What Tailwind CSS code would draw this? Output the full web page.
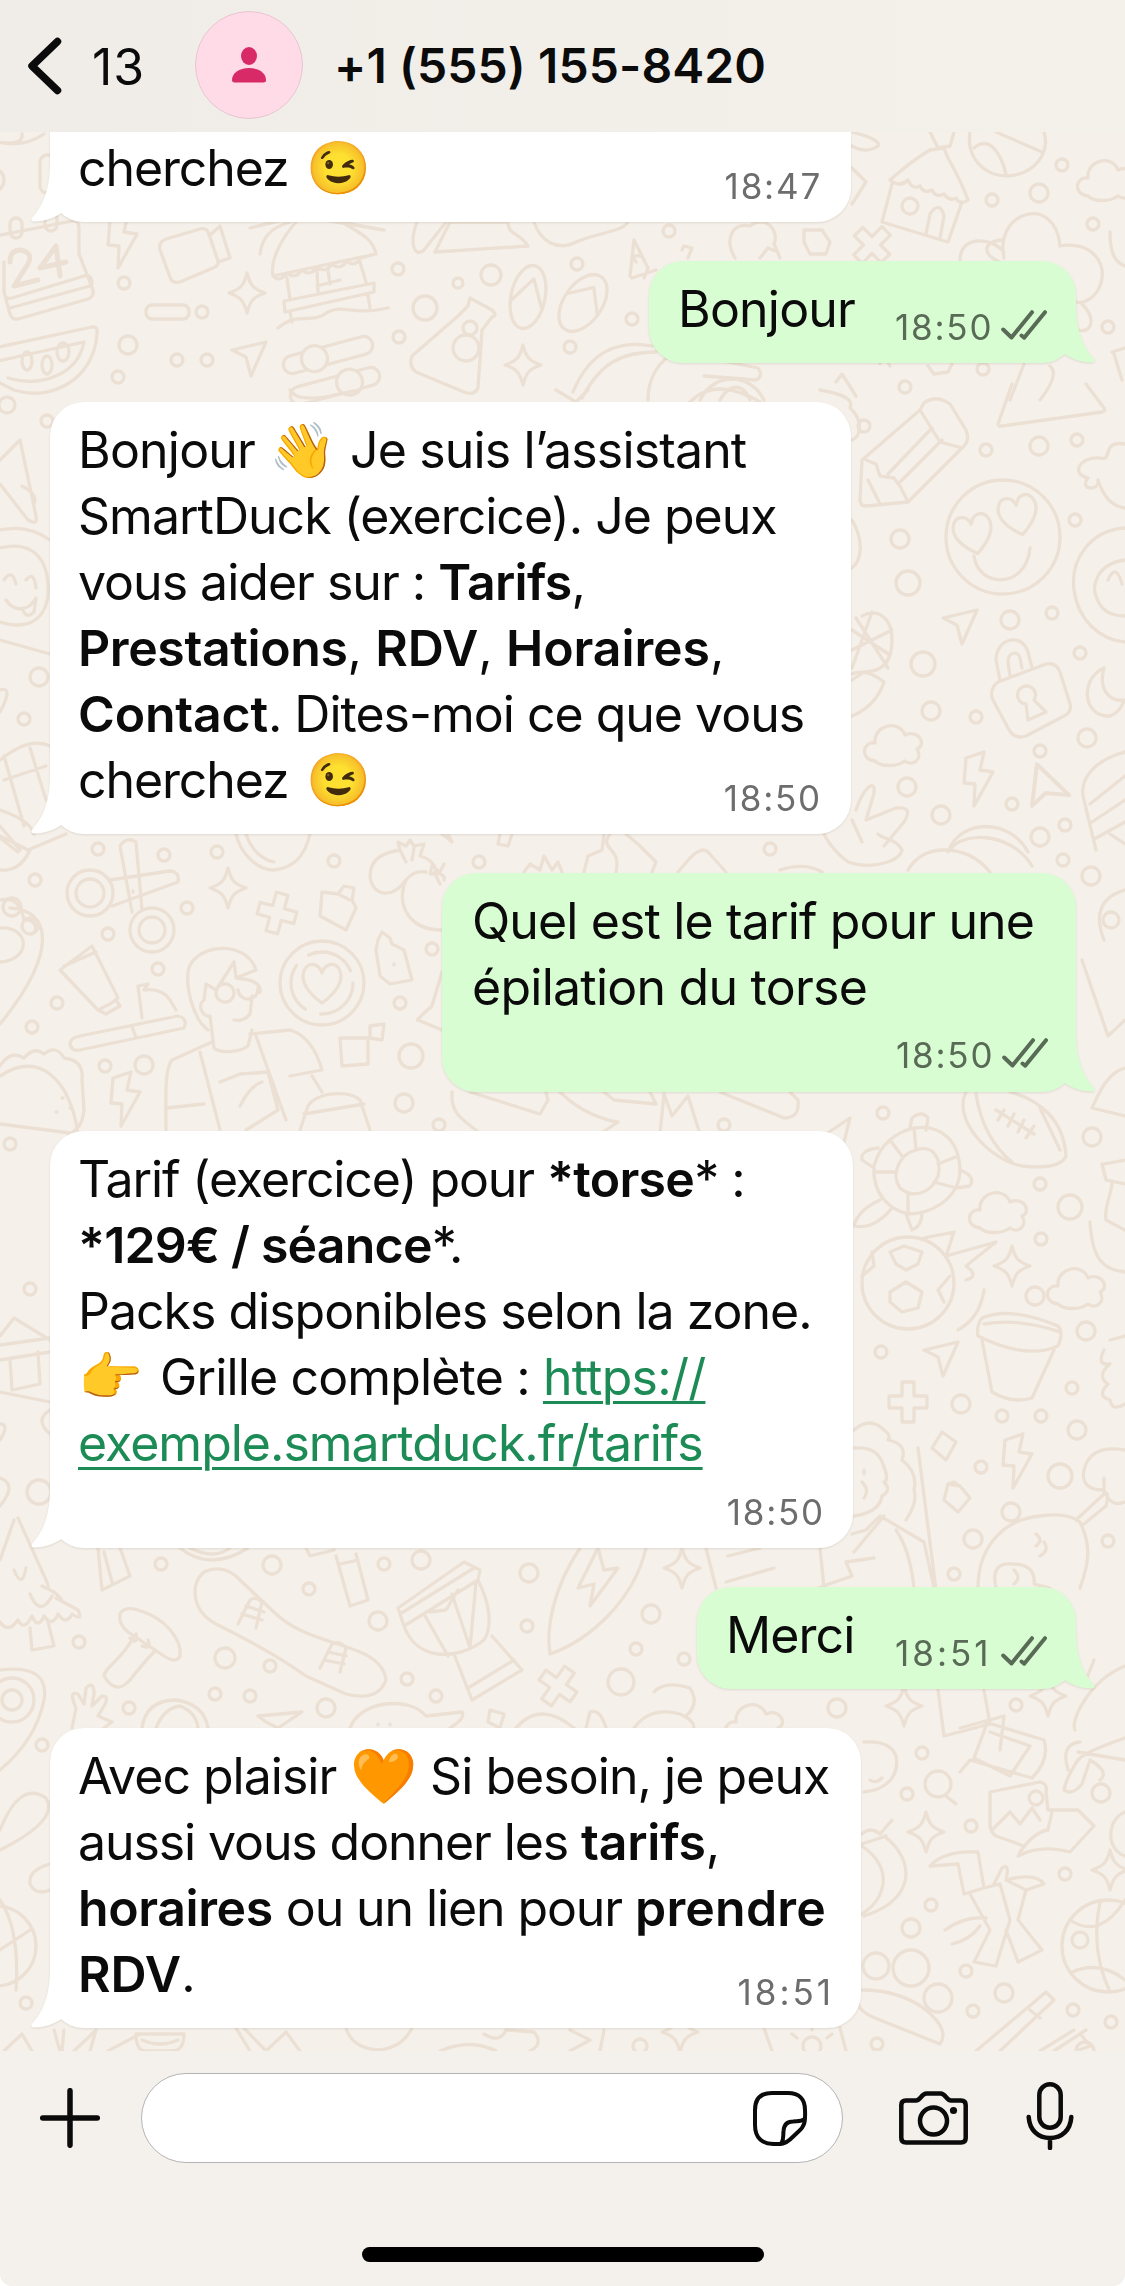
<!DOCTYPE html>
<html lang="fr">
<head>
<meta charset="utf-8">
<title>Discussion</title>
<script src="https://cdn.jsdelivr.net/npm/@tailwindcss/browser@4"></script>
</head>
<body class="bg-white">
<svg class="hidden" aria-hidden="true">
  <symbol id="tail" viewBox="0 0 40 60" overflow="visible"><path d="M19 0C19 28 12 44 .5 56.500Q0 59.500 3 59.500C12 59.500 23 56 30.500 51L42 36V0Z"/></symbol>
  <symbol id="ticks" viewBox="0 0 46 30"><path d="M2.200 19.500L10.500 27.500L31 2.200M20.500 25.500L23.200 27.700L44 2.200" fill="none" stroke="currentColor" stroke-width="4" stroke-linecap="round" stroke-linejoin="round"/></symbol>
</svg>
<div class="flex h-[2286px] w-[1125px] flex-col overflow-hidden rounded-b-[12px] bg-[#f4f0eb] font-['Inter','Noto_Color_Emoji',sans-serif] text-[50px] leading-[66px] tracking-[-1px] text-[#0b0b0b]">

  <header class="flex h-[132px] shrink-0 items-center bg-linear-to-r from-[#f0ede8] to-[#f4f1eb] pl-[27px]">
    <svg class="h-[58px] w-[36px] shrink-0" viewBox="0 0 36 58" fill="none" stroke="#0b0b0b" stroke-width="7.500" stroke-linecap="round" stroke-linejoin="round"><path d="M30.500 4.500L5 29L30.500 53.500"/></svg>
    <span class="ml-[29px] mt-px w-[103px] tracking-[1px]">13</span>
    <div class="-mt-[2px] flex size-[108px] shrink-0 items-center justify-center rounded-full border border-[#e8c5d2] bg-[#ffdae7]">
      <svg class="h-[36px] w-[34px]" viewBox="0 0 34 36" fill="#d72a66"><ellipse cx="17" cy="9" rx="8" ry="9"/><path d="M0 33C0 26 7 21 17 21S34 26 34 33Q34 35.500 31.500 35.500H2.500Q0 35.500 0 33Z"/></svg>
    </div>
    <h1 class="ml-[31px] -mt-px whitespace-nowrap text-[48px] font-semibold tracking-[.1px]">+1 (555) 155-8420</h1>
  </header>

  <main class="relative h-[1919px] shrink-0 overflow-hidden bg-[#f5f1ea]">
    <svg class="absolute inset-0 h-[1919px] w-[1125px]" viewBox="0 132 1125 1919" fill="none" stroke="#ebe0d3" stroke-width="3.300" stroke-linecap="round" stroke-linejoin="round">
      <defs>
        <path id="spark" d="M0 -20C3 -8 6 -4 18 0C6 4 3 8 0 20C-3 8 -6 4 -18 0C-6 -4 -3 -8 0 -20Z"/>
        <path id="cross" d="M-6 -20H6V-6H19V6H6V20H-6V6H-19V-6H-6Z"/>
        <path id="bolt" d="M-12 -20L6 -26L2 -8L15 -6L-4 28L-3 6L-14 5Z"/>
        <path id="arrow" d="M-17 -8L17 -16L2 18L-3 -1Z"/>
        <path id="cloud" d="M-20 16C-36 14 -32 -4 -20 -2C-22 -20 4 -26 10 -10C24 -16 32 0 22 4C28 14 18 22 10 16C2 22 -14 22 -20 16Z"/>
        <path id="heart" d="M0 22C-14 12 -22 0 -18 -10C-14 -20 -3 -18 0 -8C3 -18 14 -20 18 -10C22 0 14 12 0 22Z"/>
      </defs>
      <g id="dots"></g>

      <use href="#spark" x="247" y="293"/><use href="#spark" x="523" y="365"/><use href="#spark" x="228" y="888"/><use href="#spark" x="1012" y="1266"/><use href="#spark" x="682" y="1568"/><use href="#spark" x="904" y="1706"/><use href="#spark" x="926" y="1832"/><use href="#spark" x="1110" y="1870"/><use href="#spark" x="1048" y="1696"/><use href="#spark" x="680" y="2032"/>
      <use href="#cross" transform="translate(872 245) rotate(45)"/><use href="#cross" transform="translate(277 913) rotate(15)"/><use href="#cross" x="908" y="1402"/><use href="#cross" transform="translate(558 1686) rotate(35)"/>
      <use href="#bolt" x="122" y="240"/><use href="#bolt" x="978" y="778"/><use href="#bolt" x="125" y="1098"/><use href="#bolt" x="1017" y="1460"/>
      <use href="#arrow" x="249" y="358"/><use href="#arrow" x="960" y="626"/><use href="#arrow" x="941" y="1358"/><use href="#arrow" transform="translate(1048 790) rotate(-70) scale(1.200)"/>
      <use href="#cloud" x="1108" y="180"/><use href="#cloud" x="895" y="745"/><use href="#cloud" x="1000" y="1212"/><use href="#cloud" x="1078" y="1288"/><use href="#cloud" x="756" y="1724"/>

      <!-- calendar, watermelon, video camera -->
      <path d="M-4 236L72 221Q79 220 79 228V254L93 290Q94 297 88 299L18 319Q12 320 10 314L4 292V262M10 308L90 286M4 292Q5 300 12 298L84 276Q92 274 92 284"/>
      <path d="M10 262Q10 250 20 250Q34 252 28 264L14 286L38 280M40 268L56 246L60 276M40 268L66 262" stroke-width="5"/>
      <rect x="10" y="218" width="12" height="20" rx="6"/><rect x="45" y="213" width="12" height="18" rx="6"/>
      <path d="M-6 348L92 327Q98 326 97 334C94 380 50 402 14 390L-6 380M-6 362L84 342C78 374 42 388 8 378"/>
      <ellipse cx="27" cy="361" rx="5" ry="9"/><ellipse cx="47" cy="365" rx="5" ry="9"/><ellipse cx="63" cy="352" rx="6" ry="9"/>
      <path d="M160 250Q158 242 166 239L200 229Q206 227 209 234L218 261Q219 266 213 268L180 282Q172 284 170 277ZM209 236L220 226L230 258L218 262"/>
      <rect x="146" y="305" width="43" height="14" rx="6"/>
      <path d="M-8 140Q20 150 44 134M-4 142Q24 146 22 134"/><rect x="40" y="155" width="24" height="38" rx="7"/><circle cx="-8" cy="180" r="12"/>

      <!-- beach hut -->
      <path d="M250 228L300 216L384 230L342 222C356 232 372 236 376 254L273 276C270 262 280 240 296 222M260 254C262 238 270 228 290 222M273 276Q280 283 287 273Q295 280 302 270Q310 277 317 267Q325 274 332 264Q340 271 347 261Q354 268 361 258L376 254M287 278L290 300M317 270L318 292M360 262L366 282M284 301L374 283L374 292L285 312ZM290 312L292 322M368 296L370 308M278 328C300 310 310 326 328 312C344 304 352 316 388 308M317 286L340 280M328 270L330 284"/>
      <!-- levers -->
      <g transform="rotate(-15 328 355)"><rect x="282" y="346" width="92" height="18" rx="9"/><circle cx="314" cy="355" r="13" fill="#f5f1ea"/></g>
      <g transform="rotate(-15 335 386)"><rect x="289" y="377" width="92" height="18" rx="9"/><circle cx="350" cy="386" r="13" fill="#f5f1ea"/></g>
      <path d="M417 222C408 246 416 258 424 250L446 222M435 252L450 222L508 222C508 236 520 232 528 246ZM534 222C540 240 556 252 576 242C600 232 622 232 628 222"/>
      <!-- flip-flops -->
      <g transform="rotate(12 528 297)"><ellipse cx="528" cy="297" rx="17" ry="32"/><path d="M512 304L530 278L543 304"/></g>
      <g transform="rotate(35 583 303)"><ellipse cx="583" cy="303" rx="19" ry="32"/><path d="M565 304L583 284L601 304"/></g>
      <!-- flask -->
      <path d="M470 298L492 310Q498 316 492 317L482 330L478 388Q474 396 464 392L416 372Q408 366 412 356L458 316L468 306Z"/><circle cx="466" cy="348" r="13"/><circle cx="470" cy="328" r="7"/>
      <path d="M573 392C590 350 620 340 652 346M582 398C600 364 620 352 656 352M648 400C648 376 660 360 676 352L758 368Q764 376 756 380L704 376M700 400C714 372 750 372 764 400M720 400C730 382 744 384 750 400"/>
      <path d="M836 382L842 374L856 396M880 364L884 356L890 366M928 366L934 374L948 372L952 364M1010 400L1024 364M1040 400Q1060 374 1050 366M1112 352L1125 348M1114 354L1122 380"/>
      <!-- candle, flower -->
      <path d="M630 276L634 240L648 268L644 278M632 278L656 270M636 262Q630 254 642 256M682 250L684 246L692 248L688 258M735 258C724 240 732 222 750 226C764 214 780 230 774 244L780 258M760 258L768 248L778 252"/>
      <path d="M804 230L822 230L830 242L826 254L810 254L804 242Z"/>
      <!-- house with tower -->
      <path d="M930 132L938 148L950 146L954 132M944 148L948 158C956 172 962 184 968 200Q960 206 956 198Q950 202 944 194Q936 198 932 190Q924 194 920 186Q912 190 908 180Q900 188 890 180C906 166 916 158 930 150ZM892 184L882 222L948 242L962 202M926 234L930 214Q940 200 944 216L940 238"/><ellipse cx="910" cy="206" rx="8" ry="8"/>
      <path d="M852 132Q882 140 878 146Q866 154 852 146M852 168L866 182L852 204"/>
      <!-- beach ball -->
      <path d="M970 132C966 158 984 176 1008 176C1036 174 1050 152 1044 132M974 148C988 136 1000 150 1006 174M996 132L1042 152"/>
      <!-- flower -->
      <path d="M1000 262C980 254 984 240 1004 240M1004 258C994 210 1056 194 1060 246C1090 240 1112 264 1098 290C1092 300 1082 304 1076 302M960 260C960 236 990 236 1004 252M1082 304C1098 320 1090 334 1078 330"/><path d="M1110 232C1110 252 1114 262 1125 266"/>

      <!-- triangle, pencil -->
      <path d="M1012 384L998 424Q998 427 1002 426L1102 412Q1106 411 1104 408L1086 384"/>
      <path d="M924 403Q936 394 950 404L966 430Q970 440 964 446L908 502L866 506Q860 506 860 500L862 460L920 410ZM866 460L876 464L880 476L894 478L900 486L908 502M920 410L940 442L962 448M932 428L888 474M942 440L898 484M868 480L880 504"/>
      <path d="M852 410C862 420 862 436 852 440M852 520C864 540 862 560 852 568M820 390Q856 396 850 408M290 390Q296 402 330 396L358 390M556 390L576 402L588 390M690 402Q716 376 760 402"/>
      <!-- smiley with heart eyes -->
      <circle cx="1003" cy="537" r="57"/><use href="#heart" transform="translate(973 532) rotate(-12)"/><use href="#heart" transform="translate(1018 513) rotate(-12)"/><path d="M974 556C978 588 1026 590 1030 548"/>
      <path d="M1125 444C1100 440 1114 462 1100 458C1080 456 1070 474 1088 478C1078 490 1100 492 1098 480C1104 498 1112 506 1125 508M1125 528C1090 530 1070 560 1074 590C1078 620 1100 640 1125 642M1125 560C1096 564 1092 586 1096 596C1100 610 1110 616 1125 616M1108 580Q1116 562 1122 584"/>
      <!-- corn -->
      <path d="M862 616C876 608 892 616 892 640C892 660 884 672 864 672L852 680M852 650L892 630M852 630L890 655M856 618L888 668M872 612L852 668M852 674Q866 668 884 682Q876 706 852 716"/>
      <!-- padlock, moon -->
      <path d="M1000 680L996 660C996 638 1022 632 1028 652L1032 668M1010 676L1008 662C1008 652 1018 650 1020 658L1022 668M998 682L1046 664Q1056 662 1060 672L1070 704Q1072 712 1064 716L1026 736Q1014 740 1008 728L992 698Q990 688 998 682ZM1026 704A9 9 0 1 1 1034 700L1046 712L1028 720Z"/>
      <path d="M1104 668C1078 680 1084 718 1110 716C1116 714 1122 708 1124 700C1110 702 1098 690 1104 668"/>
      <path d="M856 810C864 784 880 776 872 800L866 820L896 808Q914 806 904 822L884 846M852 820L862 842M948 852C960 818 1010 818 1028 852M1125 752C1094 760 1078 780 1084 800L1096 850M1090 804L1125 776M1092 822L1125 800M1096 838L1125 822"/>
      <!-- left column doodles -->
      <path d="M0 460L20 440L36 516Q38 526 28 520L0 484M22 486Q38 494 34 504M0 530Q28 524 50 540M0 548C34 540 50 560 48 596C44 622 26 630 0 622M4 580Q12 568 16 584M26 580Q34 570 36 588M6 600C14 612 28 612 36 598L34 612Q26 620 22 608M0 640L50 654M0 690Q14 686 0 712M0 760Q30 736 50 746M4 756L24 826M30 748L46 800M4 780L46 766M0 810Q30 820 34 834M0 826L20 850"/>
      <path d="M0 836L28 850L66 834M0 870Q20 872 30 850M0 838L18 852"/>

      <!-- scissors -->
      <circle cx="90" cy="893" r="23"/><circle cx="90" cy="893" r="14"/><circle cx="152" cy="930" r="22"/><circle cx="152" cy="930" r="13"/>
      <path d="M110 880L170 871Q180 872 178 882L112 906M132 912L120 846Q126 836 136 842L142 910M133 891V892"/>
      <path d="M236 834C240 852 256 870 274 870C296 868 306 852 310 834M246 834C252 852 264 860 274 862M442 834L452 842L448 834M500 834L498 844L508 846L512 834"/>
      <path d="M322 892L338 894L344 886L354 888L352 900L356 908L346 930L320 916ZM338 894L350 900"/>
      <!-- pomegranates -->
      <path d="M442 930C408 930 396 904 406 880C392 900 372 896 370 876C370 856 388 852 400 850L398 842L406 846L410 840L414 846L424 844L420 856C436 860 440 876 430 874C440 872 446 876 444 880M430 874L432 866L440 872L444 864M406 880Q414 870 426 872M400 850L406 862M414 848L412 860M436 876L440 884"/>
      <path d="M524 872L530 864L540 870L544 856L552 870L558 862L562 872M584 872L588 856L602 850L604 834M610 834C598 850 622 846 616 872M626 834L640 846L656 862L652 872M678 872L690 858Q702 846 708 852L726 872M780 870Q804 862 822 872M824 834Q832 850 848 862C870 870 900 862 902 850C896 838 884 840 878 834M908 870Q920 850 944 850Q972 850 990 872M950 850C960 832 1010 830 1032 866M1110 834L1125 844"/>
      <!-- tube and knife -->
      <path d="M92 946L60 970L98 1010L110 1004L118 998L114 990ZM64 966L96 952M98 1010L106 1014L120 1006L116 1000M142 1018L138 986L148 984L144 990Q162 988 170 1000L176 1010M70 1044Q70 1038 80 1036L178 1016Q188 1018 184 1028L80 1050Q72 1052 70 1044ZM132 1026L136 1038"/>
      <!-- man with glasses -->
      <path d="M208 1030C194 1020 186 990 188 972C192 944 246 938 256 970L236 978L234 962L216 990L206 984L204 1000C196 1006 204 1018 210 1016L214 1048C220 1054 240 1052 248 1046L252 1030M236 978Q262 980 260 992M216 994A9 9 0 1 0 234 992A9 9 0 1 0 216 994M238 990A8 8 0 1 0 258 988M252 996L250 1014Q244 1022 234 1020M212 1042L172 1060C164 1070 166 1100 166 1130M250 1034L290 1030C310 1036 318 1056 322 1070L290 1076M200 1052L220 1130M256 1036L286 1120M220 1082L240 1074L268 1072L278 1110L246 1130M240 1106Q250 1086 262 1082M166 1108L204 1104M300 1130L308 1106Q312 1098 330 1094Q352 1092 360 1100L370 1130M304 1114L364 1104M312 1076L322 1092"/>
      <circle cx="322" cy="983" r="42"/><circle cx="322" cy="983" r="31" stroke-dasharray="50 16"/><use href="#heart" x="322" y="981"/>
      <path d="M378 940L382 932L390 938L392 944L404 950L412 980L390 984L380 976L376 950ZM394 964V965"/>
      <path d="M442 972L432 1006Q414 1022 418 1020L442 1030M340 1038H368V1064L342 1066ZM370 1026L384 1024L382 1040L370 1038Z"/>
      <path d="M0 900Q20 896 24 920C34 918 40 930 32 934M10 908C50 910 60 950 0 1024M0 928C30 926 32 960 0 962"/><circle cx="12" cy="907" r="9"/><circle cx="30" cy="926" r="8"/>
      <!-- taco -->
      <path d="M0 1066Q10 1050 24 1058Q34 1046 44 1054Q56 1044 64 1058Q84 1060 82 1080L84 1110Q82 1130 68 1134M0 1076C40 1050 70 1080 78 1134L0 1124M62 1098H63M56 1112H57M70 1108H71"/>
      <path d="M452 1092C450 1120 470 1120 490 1144M470 1092L540 1114L548 1100L546 1092M560 1092C580 1112 604 1120 618 1122L600 1134M604 1092L614 1100L656 1104L650 1092M660 1134L664 1094L672 1116L688 1096L700 1134M720 1092L784 1118Q800 1118 798 1100L790 1092M826 1134L850 1118L844 1142"/>
      <path d="M1125 890C1096 898 1096 920 1104 940M1082 960L1108 1036L1125 1020"/><circle cx="1111" cy="920" r="8"/>
      <!-- football -->
      <path d="M966 1092C952 1120 990 1160 1022 1166Q1060 1170 1066 1156C1064 1120 1040 1100 1010 1092M976 1094C980 1120 990 1144 1012 1162M1040 1108L1060 1150M996 1110L1034 1134M998 1120L1004 1110M1008 1126L1014 1114M1018 1132L1024 1120M1026 1138L1034 1126"/>
      <!-- turtle -->
      <path d="M914 1128C940 1124 960 1140 960 1172C958 1200 930 1214 908 1214C890 1210 872 1194 874 1166C880 1144 896 1132 914 1128ZM916 1150C934 1144 942 1160 938 1176C932 1192 914 1200 900 1188C890 1174 900 1154 916 1150ZM914 1128L916 1150M958 1156L938 1164M956 1188L934 1182M908 1214L908 1194M874 1172L894 1172M890 1140L902 1156M910 1128L912 1118Q922 1110 928 1118L926 1130M878 1148Q860 1150 862 1160L874 1168M960 1170Q976 1176 970 1186L956 1188M880 1200Q858 1210 854 1226Q874 1230 892 1208M906 1214L912 1230Q922 1226 922 1212"/>
      <path d="M1125 1068C1106 1072 1096 1100 1092 1108L1125 1116M1104 1164L1125 1160M1102 1164L1106 1180L1125 1184M1112 1184C1110 1200 1104 1206 1106 1220L1125 1230M1090 1222C1092 1260 1104 1270 1125 1272"/>
      <!-- soccer ball with flash -->
      <circle cx="908" cy="1283" r="46"/><path d="M890 1252L904 1246L922 1252L918 1264L906 1270L896 1264ZM890 1292L906 1282L922 1292L918 1308L902 1312L890 1302ZM862 1276L874 1266L872 1252M944 1302L938 1290L950 1276M924 1238L954 1232L946 1256L996 1242L966 1266Q980 1276 966 1280M958 1330Q980 1318 984 1290"/>
      <!-- cup -->
      <path d="M982 1318Q1010 1306 1058 1326Q1064 1332 1058 1346Q1026 1360 978 1336Q976 1326 982 1318ZM984 1324Q1020 1318 1060 1332M982 1340L992 1392Q1012 1404 1032 1398L1054 1350"/>
      <path d="M1104 1350Q1096 1366 1110 1364Q1096 1376 1108 1384Q1096 1396 1110 1400Q1112 1412 1125 1404M1110 1340L1125 1336"/>
      <path d="M942 1432L956 1442L946 1460L932 1448ZM948 1484L944 1500L958 1512L970 1498L960 1486ZM948 1484L954 1482L960 1486"/>
      <!-- portrait -->
      <path d="M854 1430Q870 1416 884 1430Q892 1436 888 1440Q908 1444 902 1460Q918 1472 914 1490Q918 1502 906 1520M854 1448Q876 1446 882 1462Q890 1480 884 1482Q892 1490 882 1496Q880 1512 854 1516M864 1470V1474M862 1482Q870 1490 864 1498M852 1534L866 1530L880 1516L924 1542L934 1588M884 1516L854 1552M896 1530Q910 1550 914 1588M918 1448L936 1590M820 1548L824 1588"/>
      <!-- surfer -->
      <path d="M978 1588C978 1550 1000 1520 1040 1516Q1068 1512 1080 1522C1094 1550 1086 1570 1080 1588M1036 1534Q1044 1540 1036 1546M1044 1542Q1050 1550 1040 1556M996 1588Q990 1562 1012 1564Q1036 1564 1034 1584L1050 1588M1014 1570Q1022 1578 1014 1584M1076 1520L1104 1494Q1110 1490 1106 1506L1084 1524M1104 1490V1478M1125 1450Q1090 1444 1084 1470Q1080 1490 1104 1490Q1110 1508 1125 1502"/>
      <path d="M706 1548L716 1588M728 1556L760 1548M726 1582L774 1568M812 1590L852 1576L846 1562L874 1558"/>
      <path d="M0 1336L14 1318L50 1340M0 1345L50 1338M0 1360L50 1352M10 1360L12 1390L40 1384L38 1352M0 1392L50 1402M50 1410Q34 1420 50 1434M0 1424Q10 1424 0 1440M0 1478Q18 1484 0 1506"/>

      <!-- fir tree -->
      <path d="M14 1520L0 1560M18 1518L46 1580Q52 1592 42 1586L54 1592Q68 1604 56 1598L78 1610Q84 1622 72 1614Q66 1626 58 1614Q52 1628 44 1616Q38 1630 32 1616Q24 1632 18 1620Q8 1634 0 1622M14 1570Q22 1590 26 1568M30 1594Q40 1618 52 1596M30 1628L32 1650L54 1646L48 1622"/>
      <path d="M98 1548L102 1590L130 1576L120 1548M104 1552L112 1582M180 1548Q210 1572 248 1548M190 1548Q214 1560 230 1548M306 1548L310 1556L334 1550M336 1556L350 1606L368 1600L356 1554M340 1564L358 1560"/>
      <!-- skateboard -->
      <path d="M206 1571Q226 1564 240 1580L276 1614C300 1636 330 1640 360 1652Q384 1662 386 1680Q378 1702 346 1694L306 1676C276 1654 240 1636 216 1624C190 1610 190 1580 206 1571Z"/>
      <path d="M238 1624L250 1600Q256 1596 262 1602L256 1628M242 1614L262 1620M246 1606L264 1612M320 1668L332 1644Q340 1640 346 1648L340 1672M324 1660L344 1664M328 1652L346 1656"/>
      <!-- mushroom -->
      <path d="M120 1614Q124 1606 138 1610C166 1618 182 1640 180 1656Q176 1664 164 1656L128 1632Q118 1624 120 1614ZM134 1636C122 1660 104 1668 104 1676Q116 1696 130 1680Q144 1662 154 1652M130 1638Q138 1646 136 1634M142 1646Q152 1650 148 1640"/>
      <!-- drum -->
      <path d="M398 1608L464 1562L480 1570L478 1580L404 1626ZM400 1614L474 1568M404 1626C416 1660 456 1662 484 1640C494 1624 488 1600 478 1580M424 1614L448 1656M424 1614M452 1594L470 1648L476 1582M430 1612L446 1610L458 1590M454 1654L472 1700L522 1670L492 1636M468 1688L514 1660"/>
      <!-- surfboard -->
      <path d="M580 1548C552 1590 546 1630 550 1654C590 1640 634 1600 646 1548M598 1548L578 1588L594 1584L590 1606L618 1568L604 1570Z"/>
      <!-- shells, hands and fish -->
      <circle cx="12" cy="1700" r="10"/><circle cx="12" cy="1700" r="22"/><path d="M0 1670Q50 1664 44 1700Q36 1740 0 1770M72 1728L76 1708Q68 1690 78 1694L84 1704L86 1688Q94 1680 94 1694L92 1706L102 1696Q110 1696 104 1706L98 1716L112 1722L104 1728M142 1728Q146 1700 176 1700Q204 1704 208 1728M156 1728Q164 1708 180 1706Q196 1712 198 1728M258 1716L302 1712L278 1728L266 1722ZM350 1728C360 1700 410 1696 426 1716L462 1712Q466 1718 450 1728M378 1724V1725M390 1724V1725M490 1710L504 1714L500 1728L488 1722ZM516 1728Q540 1700 574 1728M586 1728L590 1712Q600 1708 606 1728M634 1728Q650 1706 680 1714Q694 1720 694 1728M654 1692Q664 1680 690 1688Q700 1704 686 1716"/>
      <path d="M938 1690L944 1736L990 1724L984 1690M960 1728L1004 1716L1000 1750M985 1722L1044 1740Q1050 1760 1032 1778L970 1760L960 1772M986 1726L974 1758L1010 1776L1030 1746L990 1732M1086 1680L1094 1660M1125 1666C1090 1680 1070 1720 1075 1730"/>
      <!-- photo and arrow -->
      <path d="M990 1792L1040 1782Q1048 1784 1046 1792L1048 1810L1078 1810L1094 1826L1070 1852Q1040 1844 1018 1856L1024 1846L996 1836Q990 1832 990 1824ZM992 1830L1010 1812L1020 1824L1032 1808L1040 1820M1020 1852Q1034 1832 1048 1830L1052 1812"/><circle cx="1036" cy="1798" r="7"/>
      <circle cx="938" cy="1784" r="13"/><path d="M946 1796L956 1804M864 1742Q890 1740 896 1756C900 1776 886 1790 864 1792M870 1780Q876 1784 882 1778"/>
      <path d="M1125 1738Q1084 1752 1078 1760Q1066 1778 1064 1790Q1072 1796 1082 1784L1090 1760Q1110 1772 1100 1780M1068 1770Q1060 1744 1080 1742M1125 1760L1078 1752M1125 1812C1106 1820 1106 1850 1125 1856"/>
      <!-- maraca and bamboo -->
      <path d="M862 1834Q870 1826 880 1834L892 1820M862 1844L886 1836M884 1836C916 1860 916 1900 864 1916M862 1846C896 1870 884 1900 862 1914"/>
      <path d="M930 1866Q944 1850 978 1852L984 1888L964 1894L958 1864ZM970 1894L990 1930L974 1962L996 1966L1010 1920L1000 1884L984 1888M994 1884L1002 1868Q1010 1862 1006 1880L1026 1890L1018 1920L1042 1950L1018 1962L1006 1930M1006 1880Q1036 1872 1044 1884L1026 1890M945 1930Q964 1916 986 1918M952 1944Q970 1940 980 1926"/>
      <circle cx="1108" cy="1946" r="46"/><path d="M1070 1920Q1100 1940 1125 1900M1072 1972Q1100 1960 1125 1980M1100 1902Q1090 1950 1110 1992"/><circle cx="1080" cy="1940" r="8"/>
      <circle cx="-4" cy="1946" r="40"/><path d="M0 1900Q20 1930 16 1990M0 1830Q20 1780 46 1798Q60 1820 0 1850M50 1864Q28 1870 30 1884Q36 1896 50 1890M0 1950L30 1930"/>
      <circle cx="876" cy="1966" r="13"/><circle cx="911" cy="1968" r="18"/><circle cx="938" cy="1998" r="14"/>
      <path d="M862 1990Q900 1990 926 2010Q950 2030 940 2044L880 2020Q858 2012 858 2002M1046 1992L1054 2000L1000 2051M1046 1992L976 2051M1074 2030L1040 2051M1082 2036L1090 2046L1076 2051M1054 2051L1086 2030M1030 2010L1040 2018"/>
      <!-- strip above the composer -->
      <path d="M4 2051L22 2034L32 2051M54 2030L60 2051M64 2030L62 2051M74 2051L92 2034L96 2030L90 2051M108 2051L140 2034M136 2034Q136 2051 146 2051H172Q184 2051 184 2034ZM142 2040Q160 2048 178 2040M236 2028L250 2051M244 2028L266 2051L286 2032L300 2051M346 2028Q352 2048 378 2050Q402 2048 412 2028M440 2051Q470 2038 496 2051M484 2034Q500 2044 506 2030L534 2032Q544 2044 530 2051M570 2051L590 2040L570 2030M604 2030L600 2051M764 2028L772 2051M846 2051L840 2028"/>
      <circle cx="812" cy="2046" r="9"/><path d="M812 2026V2030M792 2034L797 2038M832 2034L827 2038"/><circle cx="640" cy="2046" r="7"/><circle cx="1085" cy="2051" r="9"/>
    </svg>

    <div class="relative flex flex-col gap-[39px] [&_p]:whitespace-pre">

      <section class="relative ml-[50px] flex h-[90px] w-[801px] rounded-b-[34px] bg-white pl-[28px] drop-shadow-[0_1px_1px_rgba(90,70,50,0.14)]">
        <svg class="absolute bottom-0 -left-[19px] h-[60px] w-[40px]" fill="#fff"><use href="#tail"/></svg>
        <div class="relative mt-[3px] flex h-[68px] w-[744px] justify-between">
          <p class="flex"><span class="w-[228px] tracking-[-1.1px]">cherchez</span><span class="w-[70px] text-[52px]">😉</span></p>
          <time class="-mb-px self-end text-[35px] leading-none tracking-[1.8px] text-[#6d6d6d]">18:47</time>
        </div>
      </section>

      <section class="relative mr-[49px] flex h-[102px] w-[427px] self-end rounded-[34px] bg-[#d8fdd2] pt-[15px] pl-[29px] drop-shadow-[0_1px_1px_rgba(90,70,50,0.14)]">
        <svg class="absolute -right-[19px] bottom-0 h-[60px] w-[40px] -scale-x-100" fill="#d8fdd2"><use href="#tail"/></svg>
        <p class="relative w-[217px] tracking-[-.8px]">Bonjour</p>
        <div class="relative flex h-[68px] items-end text-[#596b56]">
          <time class="-mb-px w-[106px] text-[35px] leading-none tracking-[1.8px]">18:50</time>
          <svg class="mb-[4px] h-[30px] w-[46px]"><use href="#ticks"/></svg>
        </div>
      </section>

      <section class="relative ml-[50px] h-[432px] w-[801px] rounded-[34px] bg-white pt-[15px] pl-[28px] drop-shadow-[0_1px_1px_rgba(90,70,50,0.14)]">
        <svg class="absolute bottom-0 -left-[19px] h-[60px] w-[40px]" fill="#fff"><use href="#tail"/></svg>
        <div class="relative">
          <p class="flex h-[66px]"><span class="w-[191px] tracking-[-.8px]">Bonjour</span><span class="w-[81px] text-[54px]">👋</span><span class="tracking-[-.85px]">Je suis l’assistant</span></p>
          <p class="h-[66px]">SmartDuck (exercice). Je peux</p>
          <p class="h-[66px]">vous aider sur : <b class="font-semibold tracking-[-.7px]">Tarifs</b>,</p>
          <p class="h-[66px] tracking-[-.4px]"><b class="font-semibold">Prestations</b>, <b class="font-semibold tracking-normal">RDV</b>, <b class="font-semibold tracking-[-.1px]">Horaires</b>,</p>
          <p class="h-[66px]"><b class="font-semibold tracking-[-.2px]">Contact</b>. Dites-moi ce que vous</p>
          <div class="flex h-[68px] w-[744px] justify-between">
            <p class="flex"><span class="w-[228px] tracking-[-1.1px]">cherchez</span><span class="w-[70px] text-[52px]">😉</span></p>
            <time class="-mb-px self-end text-[35px] leading-none tracking-[1.8px] text-[#6d6d6d]">18:50</time>
          </div>
        </div>
      </section>

      <section class="relative mr-[49px] flex h-[219px] w-[634px] flex-col self-end rounded-[34px] bg-[#d8fdd2] pt-[15px] pl-[30px] drop-shadow-[0_1px_1px_rgba(90,70,50,0.14)]">
        <svg class="absolute -right-[19px] bottom-0 h-[60px] w-[40px] -scale-x-100" fill="#d8fdd2"><use href="#tail"/></svg>
        <p class="relative h-[66px] tracking-[-.87px]">Quel est le tarif pour une</p>
        <p class="relative h-[66px] tracking-[-.75px]">épilation du torse</p>
        <div class="relative mt-[18px] mr-[28px] flex items-end self-end text-[#596b56]">
          <time class="-mb-px w-[106px] text-[35px] leading-none tracking-[1.8px]">18:50</time>
          <svg class="mb-[4px] h-[30px] w-[46px]"><use href="#ticks"/></svg>
        </div>
      </section>

      <section class="relative ml-[50px] flex h-[417px] w-[803px] flex-col rounded-[34px] bg-white pt-[15px] pl-[28px] drop-shadow-[0_1px_1px_rgba(90,70,50,0.14)]">
        <svg class="absolute bottom-0 -left-[19px] h-[60px] w-[40px]" fill="#fff"><use href="#tail"/></svg>
        <div class="relative">
          <p class="h-[66px] tracking-[-1.1px]">Tarif (exercice) pour <b class="font-semibold tracking-[-.7px]">*torse</b>* :</p>
          <p class="h-[66px]"><b class="font-semibold tracking-[-.8px]">*129€ / séance</b>*.</p>
          <p class="h-[66px]">Packs disponibles selon la zone.</p>
          <p class="flex h-[66px]"><span class="w-[82px] text-[52px]">👉</span><span class="tracking-[-.85px]">Grille complète : </span><a class="tracking-[-.75px] text-[#1c8b56] underline decoration-[3px] underline-offset-[6px]">https://</a></p>
          <p class="h-[66px]"><a class="text-[#1c8b56] underline decoration-[3px] underline-offset-[6px]">exemple.smartduck.fr/tarifs</a></p>
        </div>
        <time class="relative mt-[19px] mr-[28px] self-end text-[35px] leading-none tracking-[1.8px] text-[#6d6d6d]">18:50</time>
      </section>

      <section class="relative mr-[49px] flex h-[102px] w-[379px] self-end rounded-[34px] bg-[#d8fdd2] pt-[15px] pl-[29px] drop-shadow-[0_1px_1px_rgba(90,70,50,0.14)]">
        <svg class="absolute -right-[19px] bottom-0 h-[60px] w-[40px] -scale-x-100" fill="#d8fdd2"><use href="#tail"/></svg>
        <p class="relative w-[169px] tracking-[-.9px]">Merci</p>
        <div class="relative flex h-[68px] items-end text-[#596b56]">
          <time class="-mb-px w-[106px] text-[35px] leading-none tracking-[3px]">18:51</time>
          <svg class="mb-[4px] h-[30px] w-[46px]"><use href="#ticks"/></svg>
        </div>
      </section>

      <section class="relative ml-[50px] h-[300px] w-[811px] rounded-[34px] bg-white pt-[15px] pl-[28px] drop-shadow-[0_1px_1px_rgba(90,70,50,0.14)]">
        <svg class="absolute bottom-0 -left-[19px] h-[60px] w-[40px]" fill="#fff"><use href="#tail"/></svg>
        <div class="relative">
          <p class="flex h-[66px]"><span class="w-[272px]">Avec plaisir</span><span class="w-[80px] text-[54px]">🧡</span><span class="tracking-[-.95px]">Si besoin, je peux</span></p>
          <p class="h-[66px] tracking-[-1.1px]">aussi vous donner les <b class="font-semibold tracking-[-.2px]">tarifs</b>,</p>
          <p class="h-[66px] tracking-[-1.1px]"><b class="font-semibold tracking-[-.4px]">horaires</b> ou un lien pour <b class="font-semibold tracking-[.2px]">prendre</b></p>
          <div class="flex h-[68px] w-[756px] justify-between">
            <p><b class="font-semibold tracking-normal">RDV</b>.</p>
            <time class="-mb-px self-end text-[35px] leading-none tracking-[3px] text-[#6d6d6d]">18:51</time>
          </div>
        </div>
      </section>
    </div>
  </main>

  <footer class="flex grow flex-col items-center">
    <div class="flex w-full items-center pt-[22px] pl-[40px] text-[#0b0b0b]">
      <svg class="size-[60px]" viewBox="0 0 60 60" stroke="currentColor" stroke-width="5.500" stroke-linecap="round"><path d="M30 2.700V57.300M2.700 30H57.300"/></svg>
      <div class="ml-[41px] flex h-[90px] w-[702px] items-center justify-end rounded-full border border-[#b4b4b6] bg-white pr-[34px]">
        <svg class="h-[56px] w-[56px]" viewBox="0 0 56 56" fill="none" stroke="currentColor" stroke-width="4" stroke-linecap="round" stroke-linejoin="round"><path d="M24 54C10 54.500 3 48 3 35V20C3 8 9 3 20 3H36C47 3 53 9 53 20C53.500 32 53 36 46 42L38 49.500C33 54 29 54 24 54ZM29.500 53C32 49 31 46 31.500 41C32 34 36 31.500 41 31.500C46 31 49 32 52.500 29"/></svg>
      </div>
      <svg class="ml-[56px] h-[54px] w-[69px]" viewBox="0 0 69 54" fill="none" stroke="currentColor" stroke-width="4.500" stroke-linejoin="round"><path d="M7 9.500H17C22 9.500 22 2.500 27.500 2.500H41.500C47 2.500 47 9.500 52 9.500H62Q66.700 9.500 66.700 14V47Q66.700 51.500 62 51.500H7Q2.300 51.500 2.300 47V14Q2.300 9.500 7 9.500Z"/><circle cx="34.500" cy="30" r="13.500"/><circle cx="54.500" cy="19.500" r="3.600" fill="currentColor" stroke="none"/></svg>
      <svg class="-mt-[4px] ml-[58px] h-[68px] w-[48px]" viewBox="0 0 48 68" fill="none" stroke="currentColor" stroke-width="4.500" stroke-linecap="round"><rect x="13.300" y="2.300" width="21.400" height="43.500" rx="10.700"/><path d="M2.700 35C3.500 48 12 56 24 56S44.500 48 45.300 35M24 56V66"/></svg>
    </div>
    <div class="mt-[84px] h-[15px] w-[402px] rounded-full bg-black"></div>
  </footer>
</div>
<script>
// Small rings of the wallpaper: x, y, radius.
const rings=[124,283,6,202,312,6,177,360,6,207,360,6,128,345,9,118,377,6,398,269,6,458,283,5,491,275,10,577,264,6,425,308,12,399,337,6,632,319,6,570,347,6,669,231,6,1062,165,6,1039,193,9,992,200,6,1093,224,6,1108,327,6,983,369,6,905,387,6,864,426,6,986,450,6,1039,446,9,1077,440,6,1075,520,6,900,539,9,908,583,12,1010,620,9,1052,613,6,923,664,12,1080,653,6,931,711,9,976,717,6,1087,738,9,1040,751,6,907,787,9,1012,804,6,941,815,9,1065,825,6,1040,837,9,39,677,9,24,719,6,47,421,6,7,405,8,98,849,6,164,855,6,217,852,6,334,861,6,35,880,6,187,908,6,108,934,6,158,969,6,57,1003,6,32,1027,6,105,1066,6,144,1065,9,432,949,6,400,1003,6,411,1056,12,404,1103,9,439,1125,6,479,862,6,770,849,6,1063,860,6,1091,876,9,883,1113,6,724,1125,6,1092,1137,9,1040,1184,6,1070,1207,12,1041,1239,6,10,1144,6,30,1289,6,1035,1296,9,1086,1331,9,881,1352,6,1072,1388,6,961,1404,9,1002,1416,6,1041,1416,6,1077,1430,9,981,1467,6,1060,1476,12,1011,1512,9,973,1539,9,1108,1541,6,954,1574,6,39,1492,12,161,1564,6,272,1565,9,309,1589,6,384,1564,6,421,1560,9,529,1573,9,378,1621,9,527,1626,6,651,1614,9,636,1649,6,684,1659,6,79,1642,6,225,1658,10,270,1666,6,407,1679,6,621,1682,13,215,1694,6,250,1696,6,436,1696,6,129,1708,6,326,1708,9,837,1708,9,1016,1705,6,42,1745,6,922,1753,6,907,1794,6,971,1826,6,1101,1793,9,1065,1874,6,931,1905,6,911,1928,9,966,1971,6,1004,1993,9,973,2011,6,1073,2010,6,1111,2022,6,26,2003,6,877,2044,6];
const dots=document.getElementById("dots");
for(let i=0;i<rings.length;i+=3){const c=document.createElementNS("http://www.w3.org/2000/svg","circle");c.setAttribute("cx",rings[i]);c.setAttribute("cy",rings[i+1]);c.setAttribute("r",rings[i+2]);dots.append(c)}
</script>
</body>
</html>
